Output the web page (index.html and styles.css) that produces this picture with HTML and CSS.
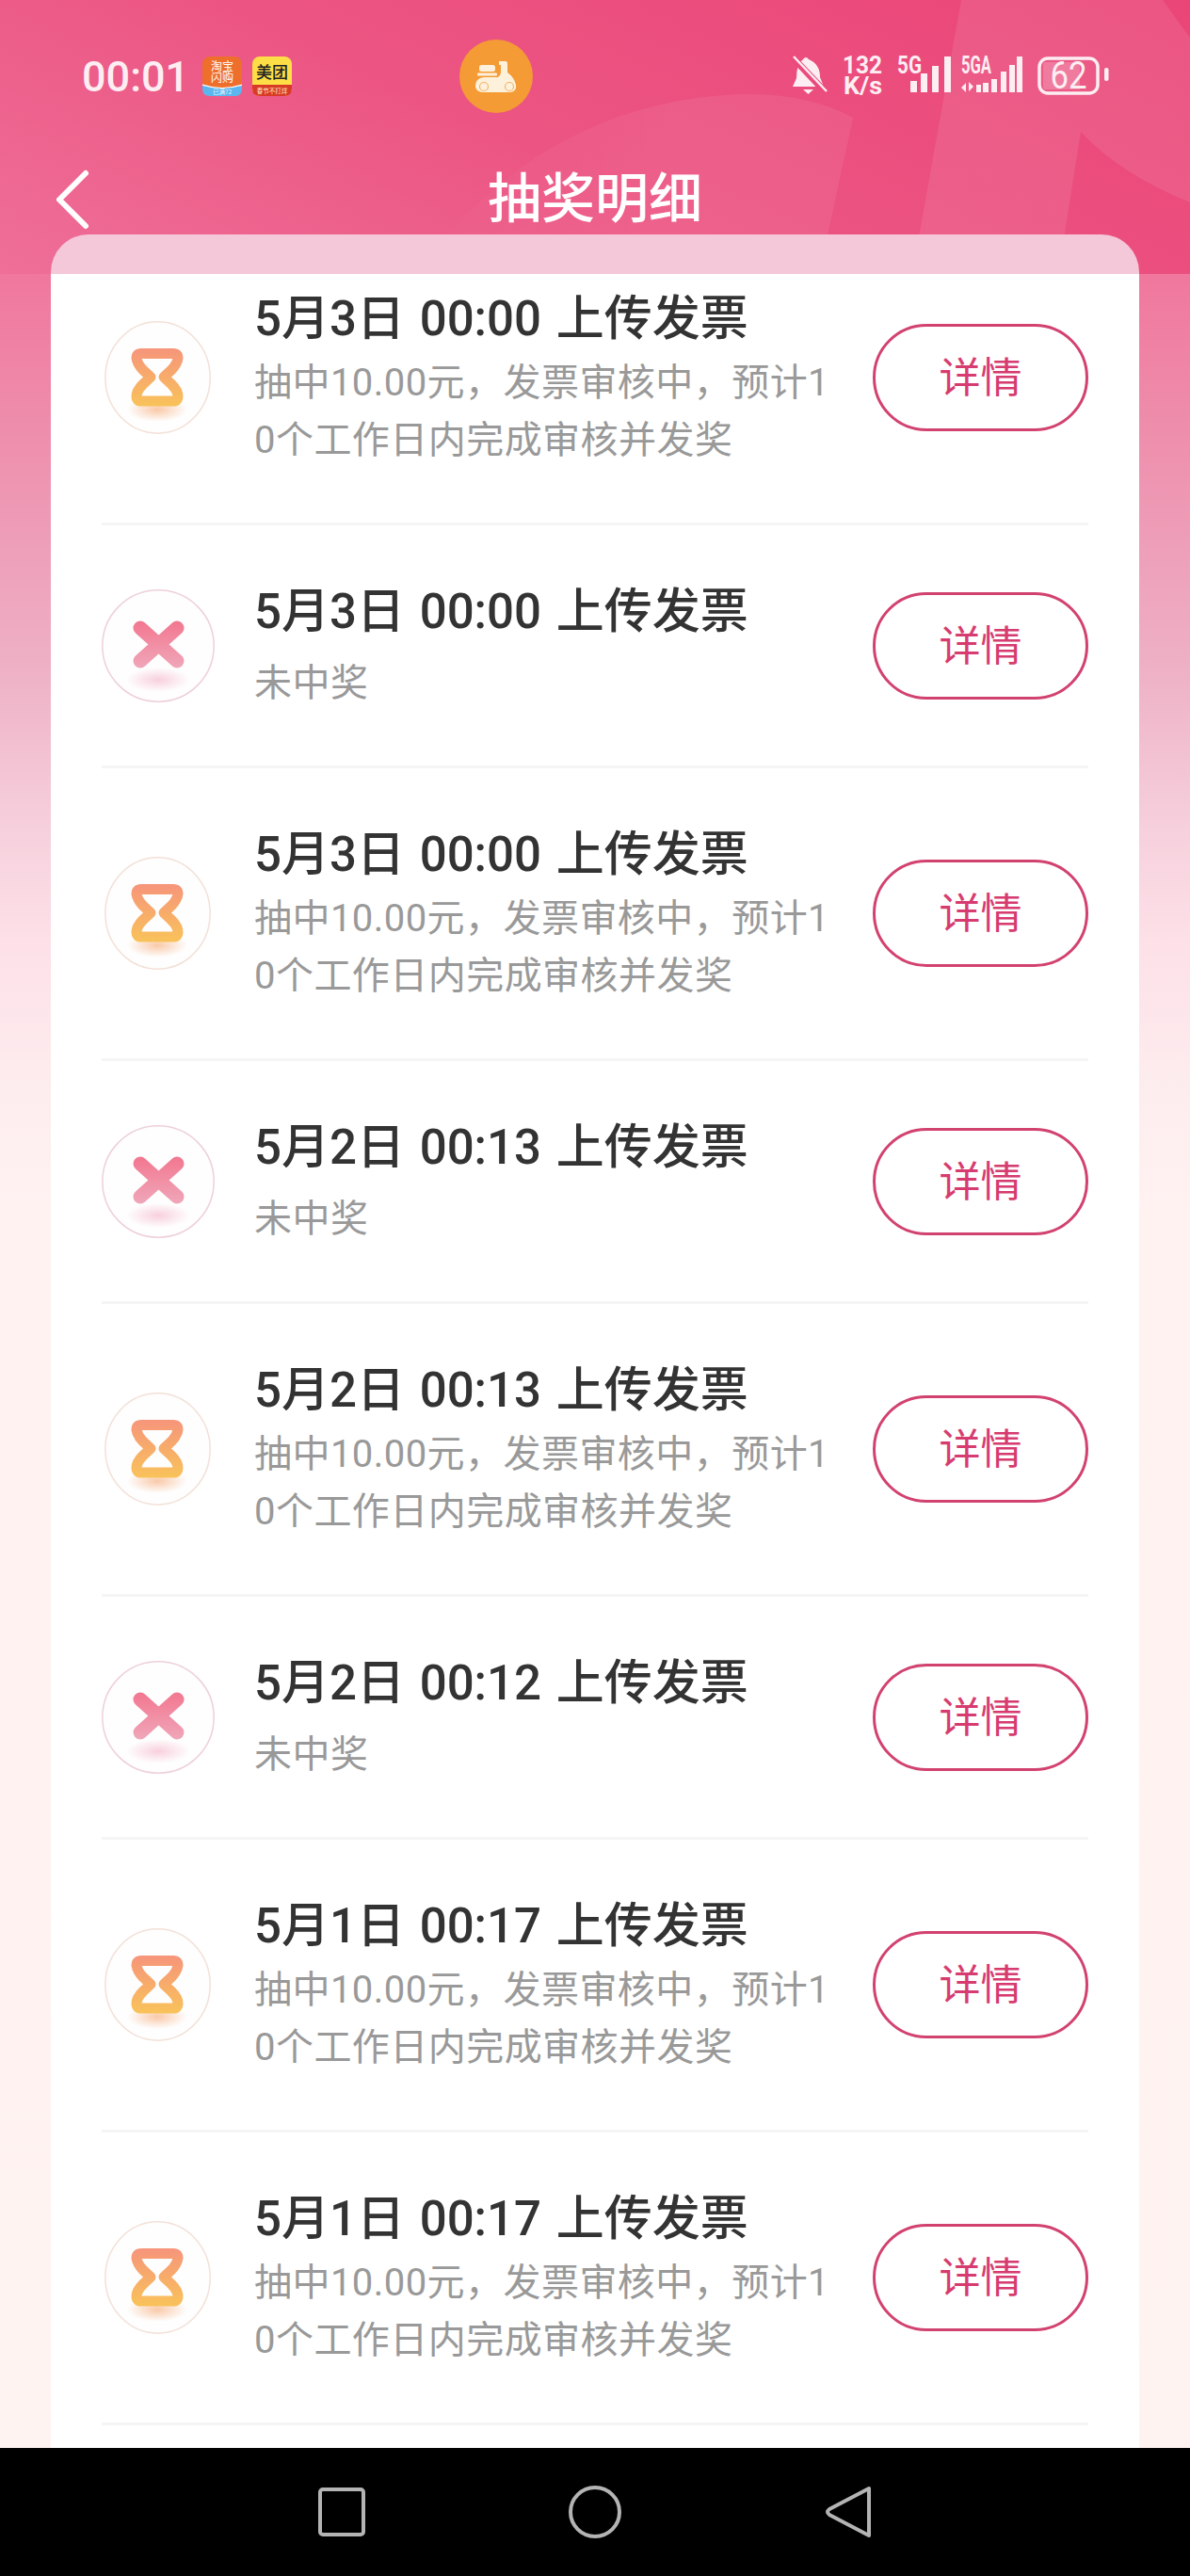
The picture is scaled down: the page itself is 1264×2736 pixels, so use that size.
FILE: index.html
```html
<!DOCTYPE html>
<html lang="zh-CN">
<head>
  <meta charset="UTF-8" />
  <meta name="viewport" content="width=device-width, initial-scale=1" />
  <title>抽奖明细</title>
  <link rel="stylesheet" href="styles.css">
</head>
<body>
  <svg class="defs" width="0" height="0" aria-hidden="true">
    <defs>
      <linearGradient id="sandGrad" gradientUnits="userSpaceOnUse" x1="0" y1="29" x2="0" y2="90">
        <stop offset="0" stop-color="#f6957b"/>
        <stop offset="1" stop-color="#f9c25a"/>
      </linearGradient>
      <linearGradient id="crossGrad" gradientUnits="userSpaceOnUse" x1="0" y1="34" x2="0" y2="82">
        <stop offset="0" stop-color="#f27790"/>
        <stop offset="1" stop-color="#f0a5b8"/>
      </linearGradient>
      <radialGradient id="sandShadow">
        <stop offset="0" stop-color="#f9c9a8"/>
        <stop offset="1" stop-color="#f9c9a8" stop-opacity="0"/>
      </radialGradient>
      <radialGradient id="crossShadow">
        <stop offset="0" stop-color="#f8d0dc"/>
        <stop offset="1" stop-color="#f8d0dc" stop-opacity="0"/>
      </radialGradient>
      <symbol id="icon-wait" viewBox="0 0 113 120">
        <ellipse cx="56.5" cy="60" rx="55.7" ry="59.2" fill="#fefefe" stroke="#f3e0d8" stroke-width="1.5"/>
        <ellipse cx="56" cy="94" rx="32" ry="13" fill="url(#sandShadow)"/>
        <path d="M39 34.500H73Q78 34.500 78 39.500Q77 46 71 52L63 59.500L71 67Q78 74 78 80Q78 85 73 85H39Q34 85 34 80Q34 74 41 67L49 59.500L41 52Q35 46 34 39.500Q34 34.500 39 34.500Z" fill="none" stroke="url(#sandGrad)" stroke-width="11" stroke-linejoin="round"/>
      </symbol>
      <symbol id="icon-lose" viewBox="0 0 120 120">
        <circle cx="60" cy="60" r="59.2" fill="#fefefe" stroke="#eed0da" stroke-width="1.5"/>
        <ellipse cx="60" cy="96" rx="34" ry="13" fill="url(#crossShadow)"/>
        <path d="M41 41L80 76M80 41L41 76" fill="none" stroke="url(#crossGrad)" stroke-width="15" stroke-linecap="round"/>
      </symbol>
    </defs>
  </svg>

  <div class="page">
    <div class="header">
      <svg class="header-bg" viewBox="0 0 1264 291" width="1264" height="291" aria-hidden="true">
        <defs>
          <linearGradient id="blobFade" x1="0" y1="0" x2="1" y2="0">
            <stop offset="0" stop-color="#fff" stop-opacity="0"/>
            <stop offset="0.6" stop-color="#fff" stop-opacity="0.07"/>
            <stop offset="1" stop-color="#fff" stop-opacity="0.07"/>
          </linearGradient>
        </defs>
        <path d="M440 291Q580 105 793 100Q860 100 906 125L870 291Z" fill="url(#blobFade)"/>
        <path d="M1021 0H1235L1264 40V215Q1190 185 1148 140L1124 291H969Z" fill="#fff" fill-opacity="0.09"/>
      </svg>

      <div class="status-bar">
        <div class="status-left">
          <span class="clock">00:01</span>
          <svg class="app-badge" width="42" height="42" viewBox="0 0 42 42" aria-hidden="true">
            <rect width="42" height="42" rx="8" fill="#ee6e2c"/>
            <path d="M0 30Q21 37 42 30V34Q42 42 34 42H8Q0 42 0 34Z" fill="#5bb6ef"/>
            <path d="M0 30Q21 37 42 30" fill="none" stroke="#fff" stroke-width="1.2"/>
            <text x="21" y="15" class="badge-text" fill="#fff" font-size="12" text-anchor="middle">淘宝</text>
            <text x="21" y="27" class="badge-text" fill="#fff" font-size="12" text-anchor="middle">闪购</text>
            <text x="21" y="39.5" class="badge-text" fill="#e6f5ff" font-size="6.5" text-anchor="middle">已满72</text>
          </svg>
          <svg class="app-badge" width="42" height="42" viewBox="0 0 42 42" aria-hidden="true">
            <rect width="42" height="42" rx="8" fill="#fdde47"/>
            <path d="M0 30H42V34Q42 42 34 42H8Q0 42 0 34Z" fill="#d93a26"/>
            <text x="21" y="23" class="badge-text" fill="#222" font-size="17" font-weight="500" text-anchor="middle">美团</text>
            <text x="21" y="39" class="badge-text" fill="#ffe9c0" font-size="6.5" text-anchor="middle">春节不打烊</text>
          </svg>
        </div>
        <div class="scooter-dot">
          <svg width="78" height="78" viewBox="0 0 78 78" aria-hidden="true">
            <rect x="21" y="27" width="17" height="7" rx="2.5" fill="#fdf1dc"/>
            <rect x="19" y="35.5" width="21" height="3" rx="1" fill="#fdf1dc"/>
            <path d="M17 50Q17 41 26 40H38Q43 41 44 35V27H42V23H49Q51 23 51 26V35Q58 40 60 48V52Q58 56 53 56H26Q18 56 17 50Z" fill="#fdf1dc"/>
            <circle cx="26" cy="50" r="4.5" fill="none" stroke="#f4b468" stroke-width="1.2"/>
            <circle cx="53" cy="50" r="4.5" fill="none" stroke="#f4b468" stroke-width="1.2"/>
          </svg>
        </div>
        <svg class="status-right" width="345" height="50" viewBox="835 58 345 50" aria-hidden="true">
          <path d="M859 65Q871 70 871 84L875 94H842L846 85Q846 70 853 65Q856 61 859 65ZM853 97H864L858.500 102Z" fill="#fdeef3"/>
          <path d="M841 62L877 100" stroke="#ea4b7c" stroke-width="7"/>
          <path d="M843 62L878 99" stroke="#fdeef3" stroke-width="2.500"/>
          <text x="895" y="80" textLength="42" lengthAdjust="spacingAndGlyphs" class="stat-text" font-size="25">132</text>
          <text x="896" y="102" textLength="41" lengthAdjust="spacingAndGlyphs" class="stat-text" font-size="25">K/s</text>
          <text x="953" y="80" textLength="26" lengthAdjust="spacingAndGlyphs" class="stat-text" font-size="25">5G</text>
          <rect x="967" y="88" width="7" height="12" fill="#fdeef3"/>
          <rect x="978" y="80" width="7" height="20" fill="#fdeef3"/>
          <rect x="990" y="72" width="7" height="28" fill="#fdeef3"/>
          <rect x="1003" y="62" width="7" height="38" fill="#fdeef3"/>
          <text x="1021" y="80" textLength="32" lengthAdjust="spacingAndGlyphs" class="stat-text" font-size="25">5GA</text>
          <path d="M1026 100V90L1021 95ZM1029 89V99L1034 94Z" fill="#fdeef3"/>
          <rect x="1037" y="92" width="5" height="8" fill="#fdeef3"/>
          <rect x="1044" y="90" width="6" height="10" fill="#fdeef3"/>
          <rect x="1053" y="86" width="6" height="14" fill="#fdeef3"/>
          <rect x="1063" y="78" width="6" height="22" fill="#fdeef3"/>
          <rect x="1072" y="71" width="6" height="29" fill="#fdeef3"/>
          <rect x="1080" y="62" width="6" height="38" fill="#fdeef3"/>
          <rect x="1104" y="64" width="62" height="37" rx="9" fill="none" stroke="#fdeef3" stroke-width="3.500"/>
          <path d="M1110 68H1147V97H1110Q1108 97 1108 95V70Q1108 68 1110 68Z" fill="#fff" fill-opacity="0.2"/>
          <text x="1135" y="96" text-anchor="middle" class="batt-text" font-size="40" textLength="39" lengthAdjust="spacingAndGlyphs">62</text>
          <rect x="1173" y="74" width="4.500" height="14" rx="2" fill="#fdeef3"/>
        </svg>
      </div>

      <div class="nav">
        <svg class="back" width="40" height="66" viewBox="0 0 40 66" aria-hidden="true">
          <path d="M34 5L6 33L34 61" fill="none" stroke="#fff" stroke-width="6" stroke-linecap="round" stroke-linejoin="round"/>
        </svg>
        <h1 class="title">抽奖明细</h1>
      </div>
      <div class="card-lip"></div>
    </div>

    <main class="main">
      <div class="card">
        <div class="list">

          <div class="row">
            <svg class="status-icon wait"><use href="#icon-wait"/></svg>
            <div class="info">
              <div class="info-title">5月3日 00:00 上传发票</div>
              <div class="info-sub">抽中10.00元，发票审核中，预计10个工作日内完成审核并发奖</div>
            </div>
            <a class="btn-detail">详情</a>
          </div>

          <div class="row lose">
            <svg class="status-icon"><use href="#icon-lose"/></svg>
            <div class="info">
              <div class="info-title">5月3日 00:00 上传发票</div>
              <div class="info-sub">未中奖</div>
            </div>
            <a class="btn-detail">详情</a>
          </div>

          <div class="row">
            <svg class="status-icon wait"><use href="#icon-wait"/></svg>
            <div class="info">
              <div class="info-title">5月3日 00:00 上传发票</div>
              <div class="info-sub">抽中10.00元，发票审核中，预计10个工作日内完成审核并发奖</div>
            </div>
            <a class="btn-detail">详情</a>
          </div>

          <div class="row lose">
            <svg class="status-icon"><use href="#icon-lose"/></svg>
            <div class="info">
              <div class="info-title">5月2日 00:13 上传发票</div>
              <div class="info-sub">未中奖</div>
            </div>
            <a class="btn-detail">详情</a>
          </div>

          <div class="row">
            <svg class="status-icon wait"><use href="#icon-wait"/></svg>
            <div class="info">
              <div class="info-title">5月2日 00:13 上传发票</div>
              <div class="info-sub">抽中10.00元，发票审核中，预计10个工作日内完成审核并发奖</div>
            </div>
            <a class="btn-detail">详情</a>
          </div>

          <div class="row lose">
            <svg class="status-icon"><use href="#icon-lose"/></svg>
            <div class="info">
              <div class="info-title">5月2日 00:12 上传发票</div>
              <div class="info-sub">未中奖</div>
            </div>
            <a class="btn-detail">详情</a>
          </div>

          <div class="row">
            <svg class="status-icon wait"><use href="#icon-wait"/></svg>
            <div class="info">
              <div class="info-title">5月1日 00:17 上传发票</div>
              <div class="info-sub">抽中10.00元，发票审核中，预计10个工作日内完成审核并发奖</div>
            </div>
            <a class="btn-detail">详情</a>
          </div>

          <div class="row">
            <svg class="status-icon wait"><use href="#icon-wait"/></svg>
            <div class="info">
              <div class="info-title">5月1日 00:17 上传发票</div>
              <div class="info-sub">抽中10.00元，发票审核中，预计10个工作日内完成审核并发奖</div>
            </div>
            <a class="btn-detail">详情</a>
          </div>

        </div>
      </div>
    </main>

    <div class="sys-nav">
      <svg width="56" height="56" viewBox="0 0 56 56" aria-hidden="true">
        <rect x="5" y="4" width="46" height="48" rx="3" fill="none" stroke="#b4b4b4" stroke-width="4"/>
      </svg>
      <svg width="56" height="56" viewBox="0 0 56 56" aria-hidden="true">
        <circle cx="28" cy="28" r="26" fill="none" stroke="#b4b4b4" stroke-width="4"/>
      </svg>
      <svg width="56" height="56" viewBox="0 0 56 56" aria-hidden="true">
        <path d="M50 3V53L8 31Q4 28 8 25Z" fill="none" stroke="#b4b4b4" stroke-width="4" stroke-linejoin="round"/>
      </svg>
    </div>
  </div>
</body>
</html>
```

FILE: styles.css
```css
body {
  margin: 0;
  font-family: Roboto, "Noto Sans CJK SC", sans-serif;
  background: #fff;
}
.defs {
  display: block;
  height: 0;
}
.page {
  width: 1264px;
  height: 2736px;
  display: flex;
  flex-direction: column;
  overflow: hidden;
}

/* top pink area */
.header {
  position: relative;
  height: 291px;
  flex-shrink: 0;
  background: linear-gradient(205deg, #ea4577 0%, #ec5583 55%, #ee6f98 100%);
}
.header-bg {
  position: absolute;
  left: 0;
  top: 0;
}
.status-bar {
  position: relative;
  height: 78px;
  padding-top: 42px;
  display: flex;
  align-items: center;
  padding-left: 87px;
}
.status-left {
  width: 401px;
  display: flex;
  align-items: center;
  gap: 11px;
}
.clock {
  font-size: 45px;
  font-weight: 500;
  color: #fdeef3;
  margin-right: 3px;
}
.app-badge {
  display: block;
}
.badge-text {
  font-family: "Noto Sans CJK SC", sans-serif;
}
.scooter-dot {
  width: 78px;
  height: 78px;
  border-radius: 50%;
  background: #f49b35;
}
.scooter-dot svg {
  display: block;
}
.status-right {
  margin-left: auto;
  margin-right: 84px;
}
.stat-text {
  font-family: Roboto, sans-serif;
  font-weight: 700;
  fill: #fdeef3;
}
.batt-text {
  font-family: Roboto, sans-serif;
  font-weight: 400;
  fill: #fdeef3;
}

.nav {
  position: relative;
  height: 74px;
  padding-top: 55px;
  display: grid;
  grid-template-columns: 1fr auto 1fr;
  align-items: center;
}
.back {
  margin-left: 57px;
  display: block;
}
.title {
  margin: 0;
  font-size: 57px;
  font-weight: 500;
  line-height: 74px;
  color: #fff;
}
.card-lip {
  position: relative;
  height: 42px;
  margin: 0 54px;
  background: #f5c8d9;
  border-radius: 40px 40px 0 0;
}

/* list */
.main {
  flex: 1;
  min-height: 0;
  padding: 0 54px;
  background: linear-gradient(180deg, #f0779e 0%, #ee8dac 7%, #eeb0c5 18%, #f6d0dc 25.5%, #fde0e8 30.7%, #fdecee 37%, #fff2f1 43%, #fff3f1 100%);
}
.card {
  height: 100%;
  background: #fff;
  overflow: hidden;
}
.list {
  margin: -44px 54px 0;
}
.row {
  display: flex;
  align-items: center;
  padding: 57px 0;
  border-bottom: 3px solid #f5f5f5;
}
.status-icon {
  width: 120px;
  height: 120px;
  flex-shrink: 0;
  margin-right: 42px;
}
.status-icon.wait {
  width: 113px;
  margin-left: 3px;
  margin-right: 46px;
}
.info {
  flex: 1;
  min-width: 0;
  padding-right: 39px;
}
.info-title {
  font-size: 51px;
  font-weight: 500;
  word-spacing: 3px;
  line-height: 72px;
  margin-top: -1px;
  padding-bottom: 1px;
  color: #333;
  white-space: nowrap;
}
.info-sub {
  font-size: 40px;
  letter-spacing: 0.45px;
  line-height: 61px;
  color: #999;
  word-break: break-all;
}
.row.lose .info-sub {
  margin-top: 8px;
}
.btn-detail {
  width: 229px;
  height: 114px;
  box-sizing: border-box;
  flex-shrink: 0;
  border: 3px solid #d2426f;
  border-radius: 57px;
  display: flex;
  align-items: center;
  justify-content: center;
  font-size: 44px;
  color: #d63c6f;
  padding-bottom: 6px;
}

/* android nav buttons */
.sys-nav {
  height: 136px;
  flex-shrink: 0;
  background: #000;
  display: flex;
  align-items: center;
  justify-content: center;
  gap: 213px;
}
```
